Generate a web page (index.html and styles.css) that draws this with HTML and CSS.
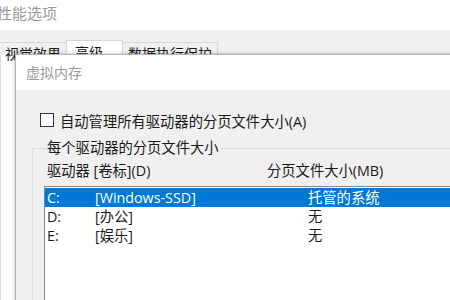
FILE: index.html
```html
<!DOCTYPE html>
<html lang="zh-CN">
<head>
    <meta charset="UTF-8">
    <title>性能选项</title>
    <link rel="stylesheet" href="styles.css">
</head>
<body>
    <div class="perf-window">
        <div class="perf-title">性能选项</div>
        <div class="tab-strip">
            <div class="tab">视觉效果</div>
            <div class="tab active">高级</div>
            <div class="tab">数据执行保护</div>
        </div>
        <div class="tab-panel"></div>

        <!-- child dialog sits over the tab panel -->
        <div class="vm-dialog">
            <div class="vm-title">虚拟内存</div>
            <div class="vm-body">
                <label class="auto-row">
                    <span class="checkbox"></span>
                    <span>自动管理所有驱动器的分页文件大小(A)</span>
                </label>

                <fieldset class="group">
                    <legend>每个驱动器的分页文件大小</legend>
                    <div class="cols">
                        <span class="col-drive">驱动器 [卷标](D)</span>
                        <span class="col-size">分页文件大小(MB)</span>
                    </div>
                    <div class="drive-list">
                        <div class="drive selected">
                            <span class="letter">C:</span>
                            <span class="label">[Windows-SSD]</span>
                            <span class="size">托管的系统</span>
                        </div>
                        <div class="drive">
                            <span class="letter">D:</span>
                            <span class="label">[办公]</span>
                            <span class="size">无</span>
                        </div>
                        <div class="drive">
                            <span class="letter">E:</span>
                            <span class="label">[娱乐]</span>
                            <span class="size">无</span>
                        </div>
                    </div>
                </fieldset>
            </div>
        </div>
    </div>
</body>
</html>
```

FILE: styles.css
```css
* {
    margin: 0;
    padding: 0;
    box-sizing: border-box;
}

body {
    width: 450px;
    height: 300px;
    overflow: hidden;
    background: #ffffff;
    font-family: 'Open Sans', 'Noto Sans CJK SC', sans-serif;
    font-size: 14.3px;
    color: #1a1a1a;
}

.perf-window {
    position: relative;
    width: 450px;
    height: 300px;
    overflow: hidden;
}

.perf-title {
    height: 30px;
    line-height: 26px;
    margin-left: -3px;
    font-size: 15px;
    color: #9a9a9a;
}

.tab-strip {
    display: flex;
    align-items: flex-end;
    height: 25px;
    background: #f0f0f0;
}

.tab {
    height: 13px;
    padding: 0 5px;
    border: 1px solid #d9d9d9;
    border-bottom: none;
    background: #f0f0f0;
    font-size: 14px;
    line-height: 22px;
    white-space: nowrap;
    margin-left: -1px;
}

.tab:first-child {
    margin-left: 0;
    border-left: none;
}

.tab.active {
    height: 15px;
    background: #ffffff;
    padding: 0 19px 0 8px;
    line-height: 24px;
}

.tab-panel {
    height: 245px;
    background: #ffffff;
    border-left: 1px solid #dcdcdc;
}

.vm-dialog {
    position: absolute;
    left: 15px;
    top: 54px;
    width: 440px;
    height: 250px;
    border: 1px solid #b5b5b5;
    border-right: none;
    border-bottom: none;
    box-shadow: -1px -1px 3px rgba(0, 0, 0, 0.18);
    background: #f0f0f0;
}

.vm-title {
    height: 35px;
    background: #ffffff;
    padding-left: 10px;
    line-height: 36px;
    font-size: 14px;
    color: #9a9a9a;
}

.vm-body {
    padding: 22px 0 0 16px;
}

.auto-row {
    display: flex;
    align-items: center;
    gap: 6px;
    padding-left: 8px;
    height: 16px;
}

.checkbox {
    width: 14px;
    height: 14px;
    border: 1px solid #333333;
    background: #ffffff;
}

.group {
    margin-top: 11px;
    border: 1px solid #dcdcdc;
    border-right: none;
    padding: 0 0 0 11px;
    height: 200px;
}

.group legend {
    margin-left: 3px;
    padding: 0 2px 0 0;
    line-height: 18px;
}

.cols {
    display: flex;
    height: 20px;
    line-height: 20px;
    padding-left: 3px;
    margin-top: 4px;
}

.col-drive {
    width: 220px;
}

.drive-list {
    margin-top: 5px;
    border: 1px solid #828790;
    border-right: none;
    background: #ffffff;
    height: 160px;
    padding-top: 1px;
}

.drive {
    display: flex;
    height: 19px;
    line-height: 19px;
    padding-left: 2px;
}

.drive.selected {
    background: #0078d7;
    color: #ffffff;
}

.letter {
    width: 48px;
}

.label {
    width: 213px;
}
```
